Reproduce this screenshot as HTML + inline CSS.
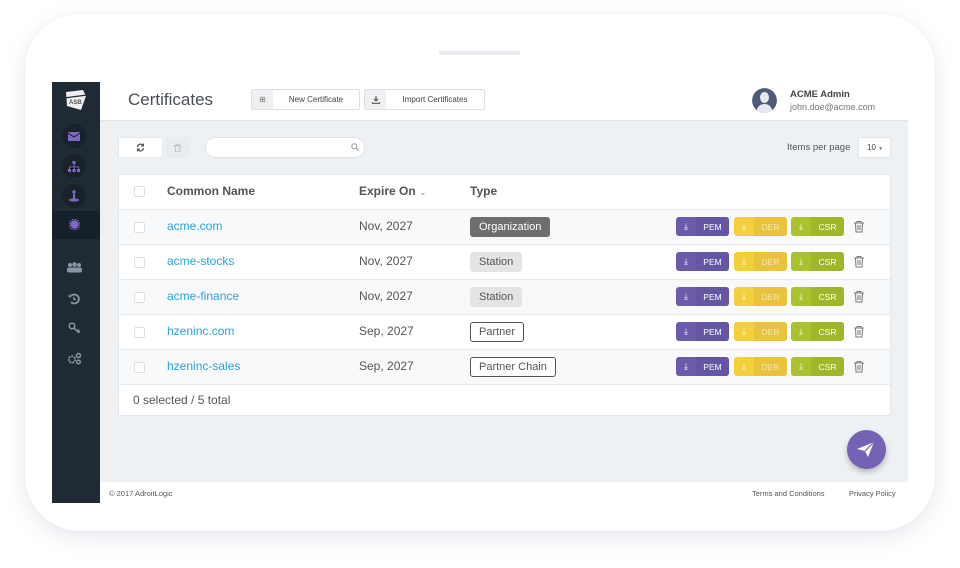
<!DOCTYPE html>
<html><head><style>
*{margin:0;padding:0;box-sizing:border-box}
body{width:960px;height:568px;background:#fff;font-family:"Liberation Sans",sans-serif;position:relative;overflow:hidden}
.frame{position:absolute;left:25px;top:14px;width:910px;height:517px;border-radius:55px;background:#fff;box-shadow:0 6px 22px rgba(120,130,160,.18),0 0 2px rgba(0,0,0,.05)}
.notch{position:absolute;left:439px;top:51px;width:81px;height:4px;border-radius:2px;background:#e6e9ee}
.abs{position:absolute}
.side{left:52px;top:82px;width:48px;height:421px;background:#1f2a35}
.head{left:100px;top:82px;width:808px;height:39px;background:#fff;border-bottom:1px solid #e2e5e8}
.content{left:100px;top:121px;width:808px;height:361px;background:#eef1f3}
.foot{left:100px;top:482px;width:808px;height:21px;background:#fff;font-size:7.5px;color:#555}
.btn{position:absolute;height:21px;border:1px solid #dcdfe3;border-radius:2px;background:#fff;font-size:8px;color:#444;display:flex;align-items:center}
.btn .ic{width:21px;height:19px;background:#eef0f2;display:flex;align-items:center;justify-content:center;color:#777;font-size:8px}
.card{left:118px;top:174px;width:773px;height:242px;background:#fff;border:1px solid #e3e6e9;border-radius:2px}
.row{position:absolute;left:0;width:771px;height:35px;border-top:1px solid #e7eaed;font-size:12px;color:#555}
.row.alt{background:#f8f9fb}
.cb{position:absolute;left:15px;top:12px;width:11px;height:11px;border:1px solid #dde0e3;border-radius:2px;background:#fff}
.name{position:absolute;left:48px;top:9px;color:#2aa3da}
.date{position:absolute;left:240px;top:9px}
.tag{position:absolute;left:351px;top:7px;height:20px;padding:0 8px;border-radius:3px;font-size:11px;line-height:18px}
.dl{position:absolute;top:7px;height:19px;width:53px;border-radius:3px;font-size:8.5px;color:#fff;display:flex;overflow:hidden}
.dl span{display:flex;align-items:center;justify-content:center}
.dl .a{width:20px}
.dl .b{flex:1}
.pem{left:557px;background:#6c5bab}.pem .b{background:#6556a3}
.der{left:615px;background:#f3cf3b}.der .b{background:#e9c43a;color:#fff9}
.csr{left:672px;background:#a9c22e}.csr .b{background:#9fb72a}
.trash{position:absolute;left:734px;top:10px}
.sideic{position:absolute;left:62px;width:24px;height:24px;border-radius:50%;background:#19222b;display:flex;align-items:center;justify-content:center}
</style></head><body>
<div class="frame"></div>
<div class="notch"></div>
<div class="abs side"></div>
<svg class="abs" style="left:63px;top:88px" width="25" height="24" viewBox="0 0 25 24"><path d="M3 4 L20 2 L23 8 L18 22 L4 18 Z" fill="#eee"/><path d="M1 10 L24 7" stroke="#1f2a35" stroke-width="1.2"/><text x="6" y="16" font-size="6" fill="#555" font-family="Liberation Sans" font-weight="bold">ASB</text></svg>
<div class="sideic" style="top:124px"><svg width="12" height="9"><rect width="12" height="9" rx="1" fill="#7d68c4"/><path d="M0 1 L6 5 L12 1" stroke="#19222b" fill="none"/></svg></div>
<div class="sideic" style="top:154px"><svg width="12" height="11"><rect x="4.5" y="0" width="3" height="3" fill="#7d68c4"/><rect x="0" y="8" width="3" height="3" fill="#7d68c4"/><rect x="4.5" y="8" width="3" height="3" fill="#7d68c4"/><rect x="9" y="8" width="3" height="3" fill="#7d68c4"/><path d="M6 3V6M1.5 8V6H10.5V8M6 6V8" stroke="#7d68c4"/></svg></div>
<div class="sideic" style="top:184px"><svg width="12" height="12"><circle cx="6" cy="2" r="1.8" fill="#7d68c4"/><rect x="5" y="4" width="2" height="5" fill="#7d68c4"/><ellipse cx="6" cy="10" rx="5" ry="1.6" fill="#7d68c4"/></svg></div>
<div class="abs" style="left:52px;top:211px;width:48px;height:28px;background:#16202a"></div>
<svg class="abs" style="left:69px;top:219px" width="11" height="11"><circle cx="5.5" cy="5.5" r="4.2" fill="#7d68c4"/><circle cx="5.5" cy="5.5" r="5.3" fill="none" stroke="#7d68c4" stroke-dasharray="1.5 1.3" stroke-width="1.2"/></svg>
<svg class="abs" style="left:67px;top:262px" width="15" height="11"><circle cx="3" cy="3" r="2" fill="#8a95a3"/><circle cx="7.5" cy="2.5" r="2.3" fill="#8a95a3"/><circle cx="12" cy="3" r="2" fill="#8a95a3"/><rect x="0" y="5.5" width="15" height="5" rx="2" fill="#8a95a3"/></svg>
<svg class="abs" style="left:68px;top:293px" width="12" height="12"><path d="M3 3 A4.5 4.5 0 1 1 3 9" stroke="#8a95a3" stroke-width="1.8" fill="none"/><path d="M1 1 L3.5 4 L0.5 4.5Z" fill="#8a95a3"/><path d="M6 4V6.5H8" stroke="#8a95a3" stroke-width="1.3" fill="none"/></svg>
<svg class="abs" style="left:68px;top:322px" width="13" height="12"><circle cx="4" cy="4" r="2.8" stroke="#8a95a3" stroke-width="1.5" fill="none"/><path d="M6 6 L11 11 M9 9 L11 7.5 M10.5 10.5 L12 9" stroke="#8a95a3" stroke-width="1.5"/></svg>
<svg class="abs" style="left:67px;top:352px" width="15" height="13"><circle cx="5" cy="7.5" r="3.2" stroke="#8a95a3" stroke-width="2" stroke-dasharray="1.8 1" fill="none"/><circle cx="11.5" cy="3.5" r="2" stroke="#8a95a3" stroke-width="1.5" fill="none"/><circle cx="11.5" cy="10" r="1.8" stroke="#8a95a3" stroke-width="1.4" fill="none"/></svg>

<div class="abs head"></div>
<div class="abs" style="left:128px;top:90px;font-size:17px;color:#4a4f55">Certificates</div>
<div class="btn" style="left:251px;top:89px;width:109px"><div class="ic">&#8862;</div><div style="flex:1;text-align:center">New Certificate</div></div>
<div class="btn" style="left:364px;top:89px;width:121px"><div class="ic"><svg width="8" height="8"><path d="M4 0V5M2 3L4 5L6 3M0.5 6V7.5H7.5V6" stroke="#666" fill="none" stroke-width="1.3"/></svg></div><div style="flex:1;text-align:center">Import Certificates</div></div>
<svg class="abs" style="left:752px;top:88px" width="25" height="25"><clipPath id="c"><circle cx="12.5" cy="12.5" r="12.5"/></clipPath><g clip-path="url(#c)"><circle cx="12.5" cy="12.5" r="12.5" fill="#4d5a7a"/><ellipse cx="12.5" cy="9.5" rx="4.5" ry="5.5" fill="#e4e7ee"/><path d="M4 26 Q5 16 12.5 16 Q20 16 21 26Z" fill="#e4e7ee"/></g></svg>
<div class="abs" style="left:790px;top:89px;font-size:9.5px;font-weight:bold;color:#444">ACME Admin</div>
<div class="abs" style="left:790px;top:102px;font-size:9px;color:#777">john.doe@acme.com</div>

<div class="abs content"></div>
<div class="btn" style="left:118px;top:137px;width:45px;justify-content:center;border-color:#e5e8eb"><svg width="9" height="9"><path d="M1.5 4A3 3 0 0 1 7 2.5M7.5 5A3 3 0 0 1 2 6.5" stroke="#555" stroke-width="1.3" fill="none"/><path d="M7.5 0.5V3H5M1.5 8.5V6H4" stroke="#555" stroke-width="1.1" fill="none"/></svg></div>
<div class="abs" style="left:166px;top:137px;width:23px;height:21px;background:#e9ecee;border-radius:2px"><svg style="position:absolute;left:8px;top:7px" width="7" height="8"><path d="M0 1.5H7M1 1.5L1.5 8H5.5L6 1.5M2.5 0.5H4.5" stroke="#bbb" fill="none"/></svg></div>
<div class="abs" style="left:205px;top:137px;width:160px;height:21px;background:#fff;border:1px solid #e0e3e6;border-radius:11px"></div>
<svg class="abs" style="left:351px;top:143px" width="8" height="8"><circle cx="3.3" cy="3.3" r="2.5" stroke="#999" fill="none"/><path d="M5 5L7.5 7.5" stroke="#999"/></svg>
<div class="abs" style="left:787px;top:142px;font-size:9.5px;color:#555">Items per page</div>
<div class="abs" style="left:858px;top:137px;width:33px;height:21px;background:#fff;border:1px solid #e3e6e9;border-radius:2px;font-size:8px;color:#444;line-height:20px;padding-left:8px">10 <span style="font-size:5px;color:#777">&#9660;</span></div>

<div class="abs card">
 <div class="cb" style="top:11px"></div>
 <div style="position:absolute;left:48px;top:9px;font-size:12px;font-weight:bold;color:#555">Common Name</div>
 <div style="position:absolute;left:240px;top:9px;font-size:12px;font-weight:bold;color:#555">Expire On <span style="font-weight:normal;font-size:9px;color:#888">&#8964;</span></div>
 <div style="position:absolute;left:351px;top:9px;font-size:12px;font-weight:bold;color:#555">Type</div>

 <div class="row alt" style="top:34px"><div class="cb"></div><div class="name">acme.com</div><div class="date">Nov, 2027</div><div class="tag" style="background:#6e6e6e;color:#fff;border:1px solid #6e6e6e">Organization</div>
 <div class="dl pem"><span class="a">&#10515;</span><span class="b">PEM</span></div><div class="dl der"><span class="a">&#10515;</span><span class="b">DER</span></div><div class="dl csr"><span class="a">&#10515;</span><span class="b">CSR</span></div><svg class="trash" width="12" height="13"><path d="M1 3H11M4 3V1.5H8V3M2.5 3L3 12H9L9.5 3M5 5V10M7 5V10" stroke="#777" fill="none"/></svg></div>

 <div class="row" style="top:69px"><div class="cb"></div><div class="name">acme-stocks</div><div class="date">Nov, 2027</div><div class="tag" style="background:#e4e4e4;color:#555;border:1px solid #e4e4e4">Station</div>
 <div class="dl pem"><span class="a">&#10515;</span><span class="b">PEM</span></div><div class="dl der"><span class="a">&#10515;</span><span class="b">DER</span></div><div class="dl csr"><span class="a">&#10515;</span><span class="b">CSR</span></div><svg class="trash" width="12" height="13"><path d="M1 3H11M4 3V1.5H8V3M2.5 3L3 12H9L9.5 3M5 5V10M7 5V10" stroke="#777" fill="none"/></svg></div>

 <div class="row alt" style="top:104px"><div class="cb"></div><div class="name">acme-finance</div><div class="date">Nov, 2027</div><div class="tag" style="background:#e4e4e4;color:#555;border:1px solid #e4e4e4">Station</div>
 <div class="dl pem"><span class="a">&#10515;</span><span class="b">PEM</span></div><div class="dl der"><span class="a">&#10515;</span><span class="b">DER</span></div><div class="dl csr"><span class="a">&#10515;</span><span class="b">CSR</span></div><svg class="trash" width="12" height="13"><path d="M1 3H11M4 3V1.5H8V3M2.5 3L3 12H9L9.5 3M5 5V10M7 5V10" stroke="#777" fill="none"/></svg></div>

 <div class="row" style="top:139px"><div class="cb"></div><div class="name">hzeninc.com</div><div class="date">Sep, 2027</div><div class="tag" style="background:#fff;color:#555;border:1px solid #555">Partner</div>
 <div class="dl pem"><span class="a">&#10515;</span><span class="b">PEM</span></div><div class="dl der"><span class="a">&#10515;</span><span class="b">DER</span></div><div class="dl csr"><span class="a">&#10515;</span><span class="b">CSR</span></div><svg class="trash" width="12" height="13"><path d="M1 3H11M4 3V1.5H8V3M2.5 3L3 12H9L9.5 3M5 5V10M7 5V10" stroke="#777" fill="none"/></svg></div>

 <div class="row alt" style="top:174px"><div class="cb"></div><div class="name">hzeninc-sales</div><div class="date">Sep, 2027</div><div class="tag" style="background:#fff;color:#555;border:1px solid #555">Partner Chain</div>
 <div class="dl pem"><span class="a">&#10515;</span><span class="b">PEM</span></div><div class="dl der"><span class="a">&#10515;</span><span class="b">DER</span></div><div class="dl csr"><span class="a">&#10515;</span><span class="b">CSR</span></div><svg class="trash" width="12" height="13"><path d="M1 3H11M4 3V1.5H8V3M2.5 3L3 12H9L9.5 3M5 5V10M7 5V10" stroke="#777" fill="none"/></svg></div>

 <div class="row" style="top:209px;height:32px"><div style="position:absolute;left:14px;top:8px">0 selected / 5 total</div></div>
</div>

<div class="abs" style="left:847px;top:430px;width:39px;height:39px;border-radius:50%;background:#7463b5;box-shadow:0 3px 6px rgba(0,0,0,.25)"></div>
<svg class="abs" style="left:856px;top:440px" width="20" height="19"><path d="M1 9 L18 2 L12 17 L9 11 Z" fill="#fff"/><path d="M9 11 L18 2" stroke="#7463b5" stroke-width="1.2"/></svg>

<div class="abs foot"><span style="position:absolute;left:9px;top:7px">© 2017 AdroitLogic</span><span style="position:absolute;left:652px;top:7px">Terms and Conditions</span><span style="position:absolute;left:749px;top:7px">Privacy Policy</span></div>
</body></html>
